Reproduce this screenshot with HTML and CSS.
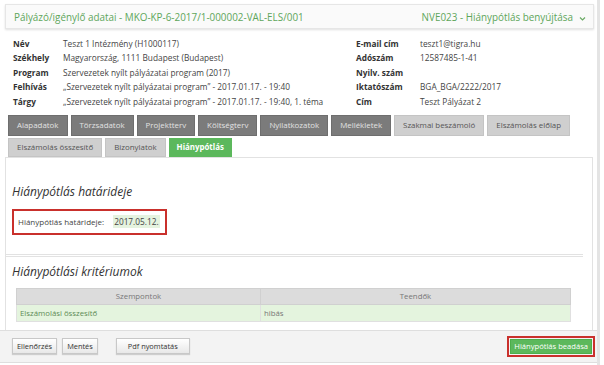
FILE: index.html
```html
<!DOCTYPE html>
<html lang="hu">
<head>
    <meta charset="UTF-8">
    <title>Hiánypótlás</title>
    <link rel="stylesheet" href="styles.css">
</head>
<body>
    <div class="sheet">
        <div class="titlebar">
            <span>Pályázó/igénylő adatai - MKO-KP-6-2017/1-000002-VAL-ELS/001</span>
            <span class="title_right">NVE023 - Hiánypótlás benyújtása
                <svg class="chevron" width="7" height="5" viewBox="0 0 7 5"><path d="M1 1.5 L3.5 4 L6 1.5" fill="none" stroke="#6aaa64" stroke-width="1.2"/></svg>
            </span>
        </div>

        <div class="info">
            <b>Név</b><span>Teszt 1 Intézmény (H1000117)</span><b>E-mail cím</b><span>teszt1@tigra.hu</span>
            <b>Székhely</b><span>Magyarország, 1111 Budapest (Budapest)</span><b>Adószám</b><span>12587485-1-41</span>
            <b>Program</b><span>Szervezetek nyílt pályázatai program (2017)</span><b>Nyilv. szám</b><span></span>
            <b>Felhívás</b><span>„Szervezetek nyílt pályázatai program” - 2017.01.17. - 19:40</span><b>Iktatószám</b><span>BGA_BGA/2222/2017</span>
            <b>Tárgy</b><span>„Szervezetek nyílt pályázatai program” - 2017.01.17. - 19:40, 1. téma</span><b>Cím</b><span>Teszt Pályázat 2</span>
        </div>

        <div class="tabs">
            <ul class="tab_row">
                <li class="dark">Alapadatok</li>
                <li class="dark">Törzsadatok</li>
                <li class="dark">Projektterv</li>
                <li class="dark">Költségterv</li>
                <li class="dark">Nyilatkozatok</li>
                <li class="dark">Mellékletek</li>
                <li class="light">Szakmai beszámoló</li>
                <li class="light">Elszámolás előlap</li>
            </ul>
            <ul class="tab_row second">
                <li class="light">Elszámolás összesítő</li>
                <li class="light">Bizonylatok</li>
                <li class="active">Hiánypótlás</li>
            </ul>
        </div>

        <div class="panel">
            <h2>Hiánypótlás határideje</h2>
            <div class="deadline">
                <span>Hiánypótlás határideje:</span>
                <span class="date">2017.05.12.</span>
            </div>
            <div class="sep"></div>
            <h2 class="second_head">Hiánypótlási kritériumok</h2>
            <div class="table_wrap">
                <table>
                    <tr><th class="col1">Szempontok</th><th>Teendők</th></tr>
                    <tr class="ok"><td>Elszámolási összesítő</td><td>hibás</td></tr>
                </table>
            </div>
        </div>

        <div class="footer">
            <div class="btns">
                <button class="btn">Ellenőrzés</button>
                <button class="btn">Mentés</button>
                <button class="btn pdf">Pdf nyomtatás</button>
            </div>
            <div class="submit_box">
                <button class="btn_green">Hiánypótlás beadása</button>
            </div>
        </div>
    </div>
</body>
</html>
```

FILE: styles.css
```css
*{margin:0; padding:0; box-sizing: border-box;}
body{background-color: #fff; font-family: "Open Sans", "DejaVu Sans", sans-serif; color:#333;}
li{list-style: none;}

.sheet{
    width:600px;
    height:365px;
    border-right:3px solid #e4e4e4;
    overflow:hidden;
}

.titlebar{
    margin:4px 3px 0 5px;
    height:25px;
    border:1px solid #e6e6e6;
    background-color:#fafafa;
    box-shadow:0 1px 2px rgba(0,0,0,.12);
    display:flex;
    justify-content: space-between;
    align-items:center;
    padding:0 7px 0 8px;
    font-size:9.9px;
    color:#5ea65a;
}
.title_right{display:flex; align-items:center; gap:6px;}
.chevron{margin-top:3px;}

.info{
    margin-top:7px;
    padding-left:13px;
    display:grid;
    grid-template-columns: 50px 293px 64px 1fr;
    grid-auto-rows:14.5px;
    font-size:8.3px;
    align-items:center;
    color:#444;
}
.info b{font-weight:700; color:#333;}

.tabs{margin-top:6px; padding-left:8px;}
.tab_row{display:flex; gap:3px;}
.tab_row li{
    height:21px;
    padding:0 8px;
    display:flex;
    align-items:center;
    flex-shrink:0;
    white-space:nowrap;
    font-size:7.9px;
}
.tab_row.second{margin-top:2px;}
.tab_row.second li{height:19px;}
.dark{background-color:#7b7b7b; color:#e2e2e2; border:1px solid #6e6e6e;}
.light{background-color:#cfcfcf; color:#555; border:1px solid #c4c4c4;}
.active{background-color:#5cb85c; color:#fff; font-weight:700;}

.panel{
    margin-left:5px;
    width:588px;
    height:173px;
    border:1px solid #e2e2e2;
    border-bottom:none;
    padding:26px 0 0 6px;
}
.panel h2{
    font-size:12px;
    font-weight:400;
    font-style:italic;
    line-height:16px;
    color:#333;
}
.deadline{
    margin-top:9px;
    width:155px;
    height:26px;
    border:2px solid #c9302c;
    display:flex;
    align-items:center;
    padding-left:4px;
    font-size:8px;
    color:#444;
}
.date{
    margin-left:9px;
    background-color:#e5f3df;
    padding:1px 1px;
    font-size:8.3px;
}
.sep{
    margin:19px 0 0 -6px;
    width:577px;
    height:3px;
    border-top:1px solid #e2e2e2;
    border-bottom:1px solid #e2e2e2;
}
.second_head{margin-top:7px;}
.table_wrap{margin:8px 0 0 4px;}
table{
    width:555px;
    border-collapse:collapse;
    font-size:7.8px;
}
th{
    height:16px;
    background-color:#dcdcdc;
    font-weight:400;
    color:#777;
    border:1px solid #d0d0d0;
}
.col1{width:244px;}
td{
    height:17px;
    padding-left:3px;
    border:1px solid #e0e0e0;
}
.ok td{background-color:#e4f4de; color:#5d8b55;}
.ok td + td{color:#777;}

.footer{
    height:33px;
    border-top:1px solid #dedede;
    border-bottom:1px solid #dedede;
    background-color:#f3f3f3;
    display:flex;
    justify-content: space-between;
    align-items:center;
    padding:0 2px 0 12px;
}
.btns{display:flex; gap:5px;}
.btn{
    height:16px;
    padding:0 4px;
    font-family:"Open Sans", sans-serif;
    font-size:7.4px;
    color:#333;
    background:linear-gradient(#ffffff, #e8e8e8);
    border:1px solid #c8c8c8;
    box-shadow:0 1px 1px rgba(0,0,0,.15);
}
.btn.pdf{margin-left:13px; padding:0 11px;}
.submit_box{
    border:2px solid #c9302c;
    padding:1px;
}
.btn_green{
    display:block;
    height:15px;
    padding:0 3px;
    font-family:"Open Sans", sans-serif;
    font-size:7.6px;
    color:#fff;
    background-color:#5cb85c;
    border:1px solid #4cae4c;
}
```
